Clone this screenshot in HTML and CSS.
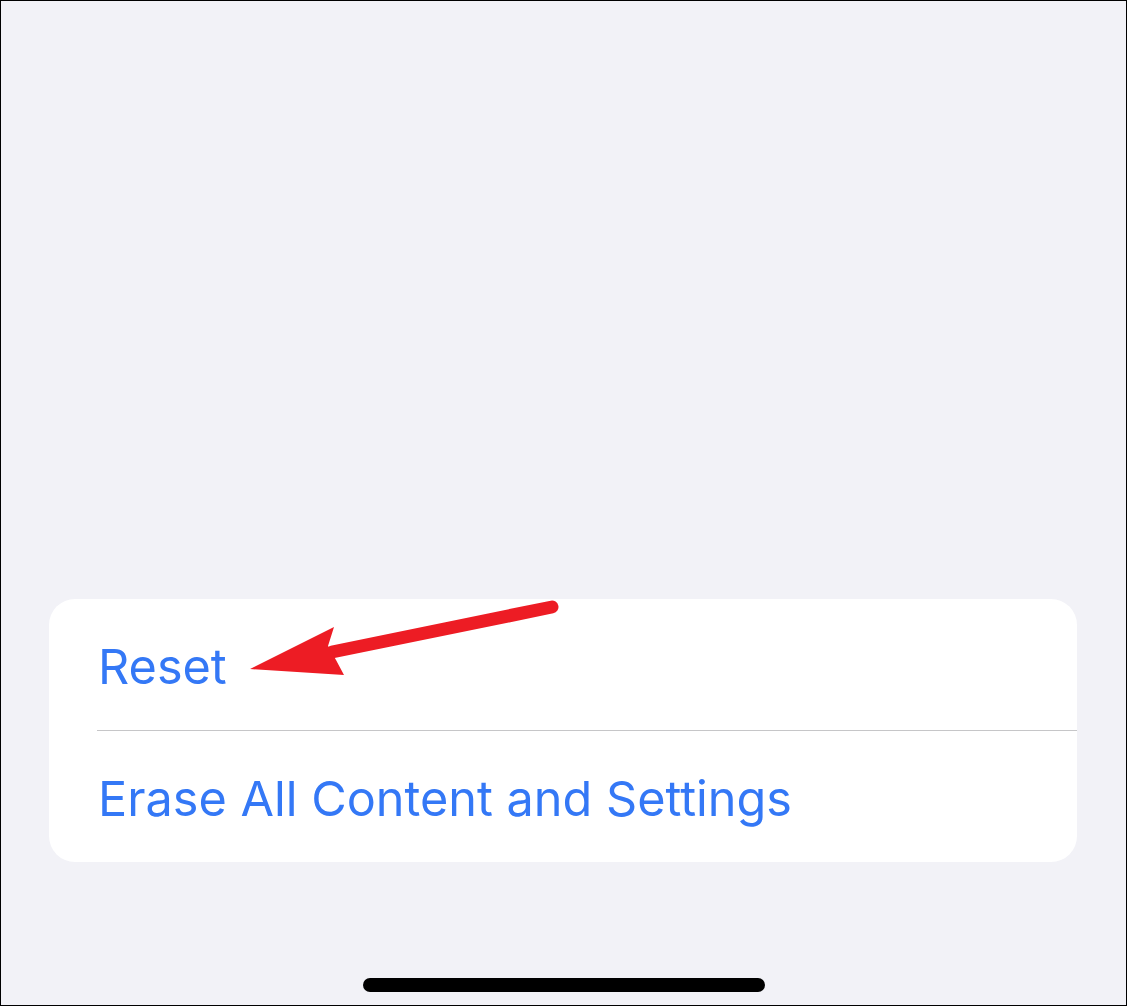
FILE: index.html
```html
<!DOCTYPE html>
<html lang="en">
<head>
  <meta charset="UTF-8" />
  <meta name="viewport" content="width=device-width, initial-scale=1.0"/>
  <title>Reset</title>
  <link rel="stylesheet" href="styles.css">
</head>
<body>

  <div class="screen">

    <!-- Settings group -->
    <div class="group">
      <div class="row">Reset</div>
      <div class="separator"></div>
      <div class="row">Erase All Content and Settings</div>
    </div>

    <!-- Home indicator -->
    <div class="home-bar"></div>

    <!-- Annotation arrow -->
    <svg class="arrow" width="1127" height="1006" viewBox="0 0 1127 1006">
      <line x1="552" y1="607" x2="332" y2="652" stroke="#ed1c24" stroke-width="13" stroke-linecap="round"/>
      <polygon points="250,669 334,627 328,646 336,660 344,675" fill="#ed1c24"/>
    </svg>

  </div>

</body>
</html>
```

FILE: styles.css
```css
* {
  box-sizing: border-box;
  margin: 0;
  padding: 0;
}

body, html {
  font-family: Inter, "Noto Sans", sans-serif;
  width: 1127px;
  height: 1006px;
  overflow: hidden;
}

.screen {
  position: relative;
  width: 1127px;
  height: 1006px;
  border: 1px solid #000;
  background: #f2f2f7;
  display: flex;
  flex-direction: column;
  padding: 598px 48px 0 48px;
}

.group {
  background: #fff;
  border-radius: 26px;
  width: 1028px;
}

.row {
  height: 131px;
  display: flex;
  align-items: center;
  padding-left: 49px;
  padding-top: 4px;
  font-size: 48.6px;
  color: #3478f6;
}

.separator {
  height: 1px;
  margin-left: 48px;
  background: #c6c6c8;
}

.home-bar {
  width: 402px;
  height: 14px;
  border-radius: 7px;
  background: #000;
  margin: 116px auto 0;
}

.arrow {
  position: absolute;
  top: -1px;
  left: -1px;
}
```
